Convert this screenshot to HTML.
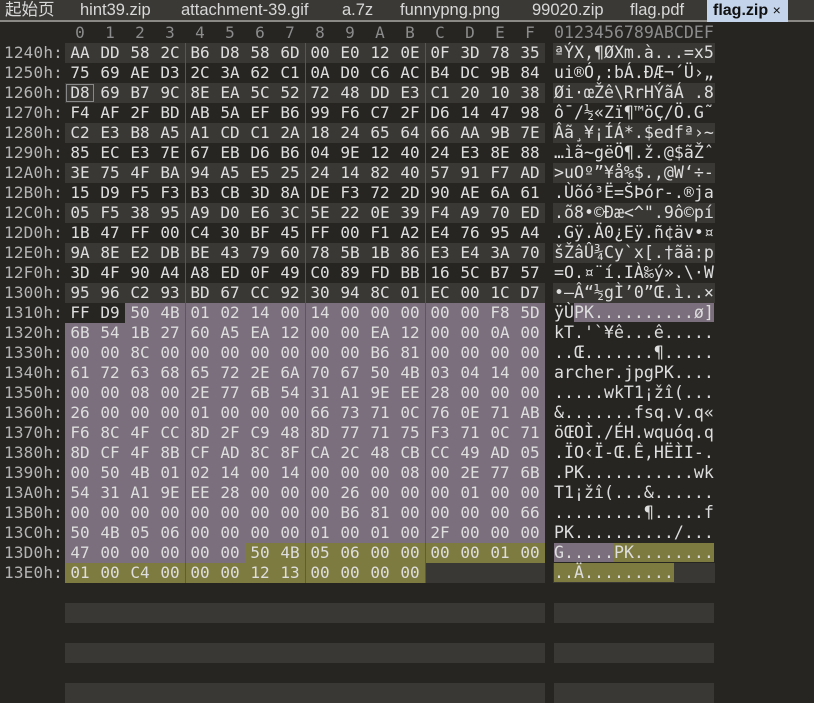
<!DOCTYPE html>
<html><head><meta charset="utf-8">
<style>
*{margin:0;padding:0;box-sizing:border-box}
body{width:814px;height:697px;background:#262522;overflow:hidden;position:relative;font-family:"DejaVu Sans Mono","Liberation Mono",monospace;color:#dedede}
#tabs{position:absolute;left:0;top:0;width:814px;height:22px;background:#3a3935;border-bottom:2px solid #8a8986;font-family:"Liberation Sans","Noto Sans CJK SC",sans-serif;font-size:16.5px;color:#d8d8d8}
#tabs span{position:absolute;top:0px;line-height:20px}
#act{position:absolute;left:707px;top:0;width:81px;height:22px;background:#c4d4ea;color:#111;font-weight:bold;font-family:"Liberation Sans",sans-serif;font-size:16px;line-height:21px;padding-left:6px}
.hd{position:absolute;top:23px;height:20px;line-height:20px;color:#8c8c8c;font-size:16px}
.r{position:absolute;left:0;width:814px;height:20px;line-height:20px}
.a{position:absolute;left:0;width:63px;text-align:right;color:#b4b4b4;font-size:16px;letter-spacing:0.2px}
.x{position:absolute;left:65px;width:480px;height:20px;display:flex;font-size:16px}
.x i{font-style:normal;width:30px;height:20px;text-align:center;display:block}
.x i:nth-child(4n+1):not(:first-child){box-shadow:inset 1px 0 0 #58565a}
.s{position:absolute;left:553px;width:162px;height:20px;font-size:16.6px;white-space:pre;padding-left:1px}
.L .x,.L .s{background:#393834}
.D .x,.D .s{background:#262522}
.x i.p,.s .p{background:#7b6f7d}
.x i.o,.s .o{background:#7d7b3f}
.x i.p:nth-child(4n+1):not(:first-child){box-shadow:inset 1px 0 0 #5f5562}
.x i.o:nth-child(4n+1):not(:first-child){box-shadow:inset 1px 0 0 #5f5e30}
.e{position:absolute;height:20px;background:#393834}
</style></head><body>
<div id="tabs">
<span style="left:5px">起始页</span>
<span style="left:80px">hint39.zip</span>
<span style="left:181px">attachment-39.gif</span>
<span style="left:342px">a.7z</span>
<span style="left:400px">funnypng.png</span>
<span style="left:532px">99020.zip</span>
<span style="left:630px">flag.pdf</span>
</div>
<div id="act">flag.zip <span style="font-weight:normal;font-size:14px">×</span></div>
<div class="hd" style="left:65px;width:480px;display:flex"><span style="width:30px;text-align:center">0</span><span style="width:30px;text-align:center">1</span><span style="width:30px;text-align:center">2</span><span style="width:30px;text-align:center">3</span><span style="width:30px;text-align:center">4</span><span style="width:30px;text-align:center">5</span><span style="width:30px;text-align:center">6</span><span style="width:30px;text-align:center">7</span><span style="width:30px;text-align:center">8</span><span style="width:30px;text-align:center">9</span><span style="width:30px;text-align:center">A</span><span style="width:30px;text-align:center">B</span><span style="width:30px;text-align:center">C</span><span style="width:30px;text-align:center">D</span><span style="width:30px;text-align:center">E</span><span style="width:30px;text-align:center">F</span></div>
<div class="hd" style="left:554px;font-size:16.6px">0123456789ABCDEF</div>

<div class="r L" style="top:43px"><div class="a">1240h:</div><div class="x"><i>AA</i><i>DD</i><i>58</i><i>2C</i><i>B6</i><i>D8</i><i>58</i><i>6D</i><i>00</i><i>E0</i><i>12</i><i>0E</i><i>0F</i><i>3D</i><i>78</i><i>35</i></div><div class="s">ªÝX,¶ØXm.à...=x5</div></div>
<div class="r D" style="top:63px"><div class="a">1250h:</div><div class="x"><i>75</i><i>69</i><i>AE</i><i>D3</i><i>2C</i><i>3A</i><i>62</i><i>C1</i><i>0A</i><i>D0</i><i>C6</i><i>AC</i><i>B4</i><i>DC</i><i>9B</i><i>84</i></div><div class="s">ui®Ó,:bÁ.ÐÆ¬´Ü›„</div></div>
<div class="r L" style="top:83px"><div class="a">1260h:</div><div class="x"><i style="outline:1px solid #888;outline-offset:-2px">D8</i><i>69</i><i>B7</i><i>9C</i><i>8E</i><i>EA</i><i>5C</i><i>52</i><i>72</i><i>48</i><i>DD</i><i>E3</i><i>C1</i><i>20</i><i>10</i><i>38</i></div><div class="s">Øi·œŽê\RrHÝãÁ .8</div></div>
<div class="r D" style="top:103px"><div class="a">1270h:</div><div class="x"><i>F4</i><i>AF</i><i>2F</i><i>BD</i><i>AB</i><i>5A</i><i>EF</i><i>B6</i><i>99</i><i>F6</i><i>C7</i><i>2F</i><i>D6</i><i>14</i><i>47</i><i>98</i></div><div class="s">ô¯/½«Zï¶™öÇ/Ö.G˜</div></div>
<div class="r L" style="top:123px"><div class="a">1280h:</div><div class="x"><i>C2</i><i>E3</i><i>B8</i><i>A5</i><i>A1</i><i>CD</i><i>C1</i><i>2A</i><i>18</i><i>24</i><i>65</i><i>64</i><i>66</i><i>AA</i><i>9B</i><i>7E</i></div><div class="s">Âã¸¥¡ÍÁ*.$edfª›~</div></div>
<div class="r D" style="top:143px"><div class="a">1290h:</div><div class="x"><i>85</i><i>EC</i><i>E3</i><i>7E</i><i>67</i><i>EB</i><i>D6</i><i>B6</i><i>04</i><i>9E</i><i>12</i><i>40</i><i>24</i><i>E3</i><i>8E</i><i>88</i></div><div class="s">…ìã~gëÖ¶.ž.@$ãŽˆ</div></div>
<div class="r L" style="top:163px"><div class="a">12A0h:</div><div class="x"><i>3E</i><i>75</i><i>4F</i><i>BA</i><i>94</i><i>A5</i><i>E5</i><i>25</i><i>24</i><i>14</i><i>82</i><i>40</i><i>57</i><i>91</i><i>F7</i><i>AD</i></div><div class="s">&gt;uOº”¥å%$.‚@W‘÷-</div></div>
<div class="r D" style="top:183px"><div class="a">12B0h:</div><div class="x"><i>15</i><i>D9</i><i>F5</i><i>F3</i><i>B3</i><i>CB</i><i>3D</i><i>8A</i><i>DE</i><i>F3</i><i>72</i><i>2D</i><i>90</i><i>AE</i><i>6A</i><i>61</i></div><div class="s">.Ùõó³Ë=ŠÞór-.®ja</div></div>
<div class="r L" style="top:203px"><div class="a">12C0h:</div><div class="x"><i>05</i><i>F5</i><i>38</i><i>95</i><i>A9</i><i>D0</i><i>E6</i><i>3C</i><i>5E</i><i>22</i><i>0E</i><i>39</i><i>F4</i><i>A9</i><i>70</i><i>ED</i></div><div class="s">.õ8•©Ðæ&lt;^&quot;.9ô©pí</div></div>
<div class="r D" style="top:223px"><div class="a">12D0h:</div><div class="x"><i>1B</i><i>47</i><i>FF</i><i>00</i><i>C4</i><i>30</i><i>BF</i><i>45</i><i>FF</i><i>00</i><i>F1</i><i>A2</i><i>E4</i><i>76</i><i>95</i><i>A4</i></div><div class="s">.Gÿ.Ä0¿Eÿ.ñ¢äv•¤</div></div>
<div class="r L" style="top:243px"><div class="a">12E0h:</div><div class="x"><i>9A</i><i>8E</i><i>E2</i><i>DB</i><i>BE</i><i>43</i><i>79</i><i>60</i><i>78</i><i>5B</i><i>1B</i><i>86</i><i>E3</i><i>E4</i><i>3A</i><i>70</i></div><div class="s">šŽâÛ¾Cy`x[.†ãä:p</div></div>
<div class="r D" style="top:263px"><div class="a">12F0h:</div><div class="x"><i>3D</i><i>4F</i><i>90</i><i>A4</i><i>A8</i><i>ED</i><i>0F</i><i>49</i><i>C0</i><i>89</i><i>FD</i><i>BB</i><i>16</i><i>5C</i><i>B7</i><i>57</i></div><div class="s">=O.¤¨í.IÀ‰ý».\·W</div></div>
<div class="r L" style="top:283px"><div class="a">1300h:</div><div class="x"><i>95</i><i>96</i><i>C2</i><i>93</i><i>BD</i><i>67</i><i>CC</i><i>92</i><i>30</i><i>94</i><i>8C</i><i>01</i><i>EC</i><i>00</i><i>1C</i><i>D7</i></div><div class="s">•–Â“½gÌ’0”Œ.ì..×</div></div>
<div class="r D" style="top:303px"><div class="a">1310h:</div><div class="x"><i>FF</i><i>D9</i><i class="p">50</i><i class="p">4B</i><i class="p">01</i><i class="p">02</i><i class="p">14</i><i class="p">00</i><i class="p">14</i><i class="p">00</i><i class="p">00</i><i class="p">00</i><i class="p">00</i><i class="p">00</i><i class="p">F8</i><i class="p">5D</i></div><div class="s">ÿÙ<span class="p">PK..........ø]</span></div></div>
<div class="r D" style="top:323px"><div class="a">1320h:</div><div class="x"><i class="p">6B</i><i class="p">54</i><i class="p">1B</i><i class="p">27</i><i class="p">60</i><i class="p">A5</i><i class="p">EA</i><i class="p">12</i><i class="p">00</i><i class="p">00</i><i class="p">EA</i><i class="p">12</i><i class="p">00</i><i class="p">00</i><i class="p">0A</i><i class="p">00</i></div><div class="s p">kT.'`¥ê...ê.....</div></div>
<div class="r D" style="top:343px"><div class="a">1330h:</div><div class="x"><i class="p">00</i><i class="p">00</i><i class="p">8C</i><i class="p">00</i><i class="p">00</i><i class="p">00</i><i class="p">00</i><i class="p">00</i><i class="p">00</i><i class="p">00</i><i class="p">B6</i><i class="p">81</i><i class="p">00</i><i class="p">00</i><i class="p">00</i><i class="p">00</i></div><div class="s p">..Œ.......¶.....</div></div>
<div class="r D" style="top:363px"><div class="a">1340h:</div><div class="x"><i class="p">61</i><i class="p">72</i><i class="p">63</i><i class="p">68</i><i class="p">65</i><i class="p">72</i><i class="p">2E</i><i class="p">6A</i><i class="p">70</i><i class="p">67</i><i class="p">50</i><i class="p">4B</i><i class="p">03</i><i class="p">04</i><i class="p">14</i><i class="p">00</i></div><div class="s p">archer.jpgPK....</div></div>
<div class="r D" style="top:383px"><div class="a">1350h:</div><div class="x"><i class="p">00</i><i class="p">00</i><i class="p">08</i><i class="p">00</i><i class="p">2E</i><i class="p">77</i><i class="p">6B</i><i class="p">54</i><i class="p">31</i><i class="p">A1</i><i class="p">9E</i><i class="p">EE</i><i class="p">28</i><i class="p">00</i><i class="p">00</i><i class="p">00</i></div><div class="s p">.....wkT1¡žî(...</div></div>
<div class="r D" style="top:403px"><div class="a">1360h:</div><div class="x"><i class="p">26</i><i class="p">00</i><i class="p">00</i><i class="p">00</i><i class="p">01</i><i class="p">00</i><i class="p">00</i><i class="p">00</i><i class="p">66</i><i class="p">73</i><i class="p">71</i><i class="p">0C</i><i class="p">76</i><i class="p">0E</i><i class="p">71</i><i class="p">AB</i></div><div class="s p">&amp;.......fsq.v.q«</div></div>
<div class="r D" style="top:423px"><div class="a">1370h:</div><div class="x"><i class="p">F6</i><i class="p">8C</i><i class="p">4F</i><i class="p">CC</i><i class="p">8D</i><i class="p">2F</i><i class="p">C9</i><i class="p">48</i><i class="p">8D</i><i class="p">77</i><i class="p">71</i><i class="p">75</i><i class="p">F3</i><i class="p">71</i><i class="p">0C</i><i class="p">71</i></div><div class="s p">öŒOÌ./ÉH.wquóq.q</div></div>
<div class="r D" style="top:443px"><div class="a">1380h:</div><div class="x"><i class="p">8D</i><i class="p">CF</i><i class="p">4F</i><i class="p">8B</i><i class="p">CF</i><i class="p">AD</i><i class="p">8C</i><i class="p">8F</i><i class="p">CA</i><i class="p">2C</i><i class="p">48</i><i class="p">CB</i><i class="p">CC</i><i class="p">49</i><i class="p">AD</i><i class="p">05</i></div><div class="s p">.ÏO‹Ï-Œ.Ê,HËÌI-.</div></div>
<div class="r D" style="top:463px"><div class="a">1390h:</div><div class="x"><i class="p">00</i><i class="p">50</i><i class="p">4B</i><i class="p">01</i><i class="p">02</i><i class="p">14</i><i class="p">00</i><i class="p">14</i><i class="p">00</i><i class="p">00</i><i class="p">00</i><i class="p">08</i><i class="p">00</i><i class="p">2E</i><i class="p">77</i><i class="p">6B</i></div><div class="s p">.PK...........wk</div></div>
<div class="r D" style="top:483px"><div class="a">13A0h:</div><div class="x"><i class="p">54</i><i class="p">31</i><i class="p">A1</i><i class="p">9E</i><i class="p">EE</i><i class="p">28</i><i class="p">00</i><i class="p">00</i><i class="p">00</i><i class="p">26</i><i class="p">00</i><i class="p">00</i><i class="p">00</i><i class="p">01</i><i class="p">00</i><i class="p">00</i></div><div class="s p">T1¡žî(...&amp;......</div></div>
<div class="r D" style="top:503px"><div class="a">13B0h:</div><div class="x"><i class="p">00</i><i class="p">00</i><i class="p">00</i><i class="p">00</i><i class="p">00</i><i class="p">00</i><i class="p">00</i><i class="p">00</i><i class="p">00</i><i class="p">B6</i><i class="p">81</i><i class="p">00</i><i class="p">00</i><i class="p">00</i><i class="p">00</i><i class="p">66</i></div><div class="s p">.........¶.....f</div></div>
<div class="r D" style="top:523px"><div class="a">13C0h:</div><div class="x"><i class="p">50</i><i class="p">4B</i><i class="p">05</i><i class="p">06</i><i class="p">00</i><i class="p">00</i><i class="p">00</i><i class="p">00</i><i class="p">01</i><i class="p">00</i><i class="p">01</i><i class="p">00</i><i class="p">2F</i><i class="p">00</i><i class="p">00</i><i class="p">00</i></div><div class="s p">PK........../...</div></div>
<div class="r D" style="top:543px"><div class="a">13D0h:</div><div class="x"><i class="p">47</i><i class="p">00</i><i class="p">00</i><i class="p">00</i><i class="p">00</i><i class="p">00</i><i class="o">50</i><i class="o">4B</i><i class="o">05</i><i class="o">06</i><i class="o">00</i><i class="o">00</i><i class="o">00</i><i class="o">00</i><i class="o">01</i><i class="o">00</i></div><div class="s"><span class="p">G.....</span><span class="o">PK........</span></div></div>
<div class="r L" style="top:563px"><div class="a">13E0h:</div><div class="x"><i class="o">01</i><i class="o">00</i><i class="o">C4</i><i class="o">00</i><i class="o">00</i><i class="o">00</i><i class="o">12</i><i class="o">13</i><i class="o">00</i><i class="o">00</i><i class="o">00</i><i class="o">00</i><i></i><i></i><i></i><i></i></div><div class="s"><span class="o">..Ä.........</span></div></div>

<div class="e" style="left:65px;top:603px;width:480px"></div><div class="e" style="left:554px;top:603px;width:160px"></div>
<div class="e" style="left:65px;top:643px;width:480px"></div><div class="e" style="left:554px;top:643px;width:160px"></div>
<div class="e" style="left:65px;top:683px;width:480px"></div><div class="e" style="left:554px;top:683px;width:160px"></div>
</body></html>
